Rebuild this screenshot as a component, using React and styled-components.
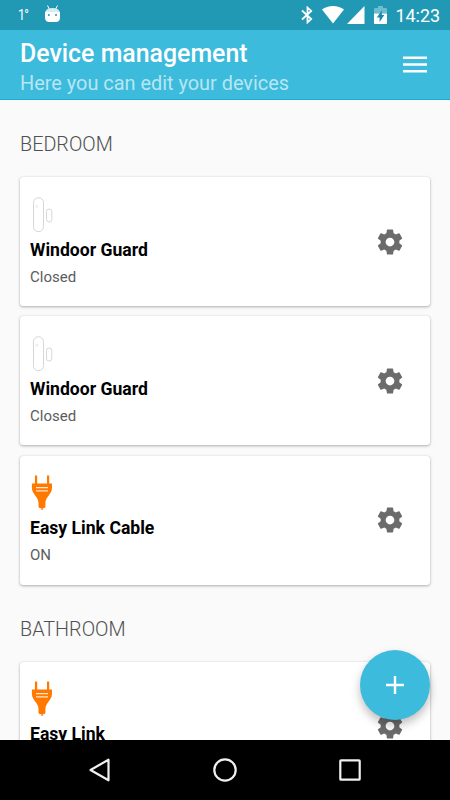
import styled, { createGlobalStyle } from 'styled-components';

const rooms = [
  {
    name: 'BEDROOM',
    devices: [
      { id: 1, type: 'guard', name: 'Windoor Guard', state: 'Closed' },
      { id: 2, type: 'guard', name: 'Windoor Guard', state: 'Closed' },
      { id: 3, type: 'plug', name: 'Easy Link Cable', state: 'ON' },
    ],
  },
  {
    name: 'BATHROOM',
    devices: [{ id: 4, type: 'plug', name: 'Easy Link', state: 'ON' }],
  },
];

const GuardIcon = () => (
  <svg width="24" height="36" viewBox="0 0 24 36" fill="none" stroke="#d6d6d6">
    <rect x="3.5" y="0.7" width="10" height="34" rx="5" />
    <rect x="16.5" y="12" width="5.3" height="13" rx="2.6" />
    <circle cx="6.8" cy="9.3" r="1" strokeWidth="0.5" />
  </svg>
);

const PlugIcon = () => (
  <svg width="24" height="36" viewBox="0 0 24 36" fill="#ff7800">
    <path d="M5 0.6h2.2v8H17V0.6h2.2v8H22v4.2c0 4-2.2 6-4 8.6-1.6 2.2-2.6 4-2.6 6.6v3.2c0 1.3-.8 2-2 2h-.7v1.8h-1.3v-1.8h-.9c-1.2 0-2-.7-2-2V28c0-2.6-1-4.4-2.6-6.6-1.8-2.6-4-4.6-4-8.6V8.6h3z" />
    <path d="M6 12.6h12M6 15.9h12" stroke="#ffe6d0" strokeWidth="1.3" />
  </svg>
);

const GearIcon = () => (
  <svg width="30" height="30" viewBox="0 0 24 24" fill="#6b6b6b">
    <path d="M19.43 12.98c.04-.32.07-.64.07-.98s-.03-.66-.07-.98l2.11-1.65c.19-.15.24-.42.12-.64l-2-3.46c-.12-.22-.39-.3-.61-.22l-2.49 1c-.52-.4-1.08-.73-1.69-.98l-.38-2.65C14.46 2.18 14.25 2 14 2h-4c-.25 0-.46.18-.49.42l-.38 2.65c-.61.25-1.17.59-1.69.98l-2.49-1c-.23-.09-.49 0-.61.22l-2 3.46c-.13.22-.07.49.12.64l2.11 1.65c-.04.32-.07.65-.07.98s.03.66.07.98l-2.11 1.65c-.19.15-.24.42-.12.64l2 3.46c.12.22.39.3.61.22l2.49-1c.52.4 1.08.73 1.69.98l.38 2.65c.03.24.24.42.49.42h4c.25 0 .46-.18.49-.42l.38-2.65c.61-.25 1.17-.59 1.69-.98l2.49 1c.23.09.49 0 .61-.22l2-3.46c.12-.22.07-.49-.12-.64l-2.11-1.65zM12 15.5c-1.93 0-3.5-1.57-3.5-3.5s1.57-3.5 3.5-3.5 3.5 1.57 3.5 3.5-1.57 3.5-3.5 3.5z" />
  </svg>
);

const AndroidIcon = () => (
  <svg width="17" height="20" viewBox="0 0 17 20">
    <path d="M3.5 0.5l2 4M13.5 0.5l-2 4" stroke="#fff" strokeWidth="1" />
    <path d="M1.2 7C2 4.1 4.5 3 8.5 3s6.5 1.1 7.3 4z" fill="#d5edf3" />
    <path d="M1 7h15v5.5c0 3-1.5 4.5-4.5 4.5h-6C2.5 17 1 15.5 1 12.5z" fill="#fff" />
    <circle cx="4.8" cy="10" r="1" fill="#2199b5" />
    <circle cx="12" cy="10" r="1" fill="#2199b5" />
  </svg>
);

const BluetoothIcon = () => (
  <svg width="12" height="18" viewBox="0 0 12 18" fill="none" stroke="#fff" strokeWidth="1.8">
    <path d="M1 4.5l9.2 8.6-3.7 3.3V1.6l3.7 3.3L1 13.5" />
  </svg>
);

const WifiIcon = () => (
  <svg width="22" height="18" viewBox="0 0 22 18" fill="#fff">
    <path d="M0 3.6C6-1.1 16-1.1 22 3.6L11 17.5z" />
  </svg>
);

const SignalIcon = () => (
  <svg width="18" height="18" viewBox="0 0 18 18" fill="#fff">
    <path d="M0 18L17.5 0v18z" />
  </svg>
);

const BatteryIcon = () => (
  <svg width="13" height="18" viewBox="0 0 13 18">
    <path d="M4 0h5v2h3q1 0 1 1v4.5H0V3q0-1 1-1h3z" fill="#fff" opacity="0.35" />
    <path d="M0 7.5h13V17q0 1-1 1H1q-1 0-1-1z" fill="#fff" />
    <path d="M7.8 4.5L2.8 11.5h2.8v4.5l4.7-7H7.8z" fill="#168aa8" />
  </svg>
);

const MenuIcon = () => (
  <svg width="24" height="18" viewBox="0 0 24 18" fill="#fff">
    <path d="M0 0.4h24v2.6H0zM0 7.2h24v2.6H0zM0 14h24v2.6H0z" />
  </svg>
);

const App = () => (
  <Phone>
    <GlobalStyle />
    <StatusBar>
      <Temperature>1°</Temperature>
      <AndroidIcon />
      <StatusIcons>
        <BluetoothIcon />
        <WifiIcon />
        <SignalIcon />
        <BatteryIcon />
      </StatusIcons>
      <Clock>14:23</Clock>
    </StatusBar>
    <Header>
      <div>
        <Title>Device management</Title>
        <Subtitle>Here you can edit your devices</Subtitle>
      </div>
      <MenuButton aria-label="Menu">
        <MenuIcon />
      </MenuButton>
    </Header>
    <Content>
      {rooms.map((room) => (
        <Room key={room.name}>
          <RoomName>{room.name}</RoomName>
          <DeviceList>
            {room.devices.map((device) => (
              <Card key={device.id}>
                <Device>
                  {device.type === 'plug' ? <PlugIcon /> : <GuardIcon />}
                  <DeviceName>{device.name}</DeviceName>
                  <DeviceState>{device.state}</DeviceState>
                </Device>
                <IconButton aria-label="Settings">
                  <GearIcon />
                </IconButton>
              </Card>
            ))}
          </DeviceList>
        </Room>
      ))}
      <AddButton aria-label="Add device">
        <svg width="20" height="20" viewBox="0 0 20 20" stroke="#fff" strokeWidth="2.4">
          <path d="M10 1v18M1 10h18" />
        </svg>
      </AddButton>
    </Content>
    <NavBar>
      <svg width="26" height="26" viewBox="0 0 26 26">
        <path d="M3.5 13L21.5 2.7v20.6z" />
      </svg>
      <svg width="26" height="26" viewBox="0 0 26 26">
        <circle cx="13" cy="13" r="10.7" />
      </svg>
      <svg width="26" height="26" viewBox="0 0 26 26">
        <rect x="3.3" y="3.3" width="19.4" height="19.4" rx="0.8" />
      </svg>
    </NavBar>
  </Phone>
);

export default App;

const GlobalStyle = createGlobalStyle`
  * {
    box-sizing: border-box;
  }

  body {
    margin: 0;
    font-family: Roboto, sans-serif;
  }

  h1, h2, h3, p {
    margin: 0;
  }

  button {
    padding: 0;
    border: 0;
    background: none;
  }

  svg {
    display: block;
  }
`;

const Phone = styled.div`
  display: flex;
  flex-direction: column;
  width: 450px;
  height: 800px;
  overflow: hidden;
  background: #fafafa;
`;

const StatusBar = styled.div`
  display: flex;
  align-items: center;
  flex: none;
  height: 30px;
  padding: 0 10px 0 18px;
  background: #2199b5;
  color: #fff;
`;

const Temperature = styled.span`
  width: 26px;
  font-size: 15.5px;
  letter-spacing: -1px;
  transform: scaleX(0.8);
  transform-origin: left;
`;

const StatusIcons = styled.div`
  display: flex;
  align-items: center;
  margin-left: auto;

  svg:nth-child(2) {
    margin-left: 9px;
  }

  svg:nth-child(3) {
    margin-left: 3px;
  }

  svg:nth-child(4) {
    margin-left: 9px;
  }
`;

const Clock = styled.span`
  margin-left: 8.5px;
  padding-top: 1px;
  font-size: 17.9px;
  line-height: 30px;
`;

const Header = styled.header`
  display: flex;
  justify-content: space-between;
  flex: none;
  height: 70px;
  padding: 8px 23px 0 20px;
  border-bottom: 1px solid #18aed0;
  background: #3cbbdc;
`;

const Title = styled.h1`
  padding-top: 1px;
  font-size: 24.9px;
  font-weight: 500;
  line-height: 29px;
  color: #fff;
`;

const Subtitle = styled.p`
  font-size: 19.9px;
  line-height: 31px;
  color: #b7e6f2;
`;

const MenuButton = styled.button`
  align-self: flex-start;
  margin-top: 18px;
`;

const Content = styled.main`
  position: relative;
  flex: 1;
  overflow: hidden;
  padding: 30px 20px 0;
`;

const Room = styled.section`
  margin-bottom: 30px;
`;

const RoomName = styled.h2`
  margin-bottom: 18px;
  font-size: 19.8px;
  font-weight: 300;
  line-height: 29px;
  color: #505050;
`;

const DeviceList = styled.div`
  display: flex;
  flex-direction: column;
  gap: 10.3px;
`;

const Card = styled.article`
  display: flex;
  align-items: center;
  justify-content: space-between;
  height: 129px;
  padding: 0 25px 0 10px;
  border-radius: 3px;
  background: #fff;
  box-shadow: 0 1px 3px rgba(0, 0, 0, 0.3), 0 0 1px rgba(0, 0, 0, 0.15);
`;

const Device = styled.div`
  padding-top: 2px;
`;

const DeviceName = styled.h3`
  margin-top: 5px;
  font-size: 17.6px;
  font-weight: 700;
  line-height: 24px;
  color: #000;
`;

const DeviceState = styled.p`
  margin-top: 3px;
  font-size: 15px;
  line-height: 24px;
  color: #5c5c5c;
`;

const IconButton = styled.button`
  width: 30px;
  height: 30px;
`;

const AddButton = styled.button`
  position: absolute;
  right: 20px;
  bottom: 20px;
  display: flex;
  align-items: center;
  justify-content: center;
  width: 70px;
  height: 70px;
  border-radius: 50%;
  background: #3cbbdc;
  box-shadow: 0 5px 10px rgba(0, 0, 0, 0.26);
`;

const NavBar = styled.nav`
  display: flex;
  align-items: center;
  justify-content: space-between;
  flex: none;
  height: 60px;
  padding: 0 87px;
  background: #000;

  svg {
    fill: none;
    stroke: #f0f0f0;
    stroke-width: 2.2px;
    stroke-linejoin: round;
  }
`;
